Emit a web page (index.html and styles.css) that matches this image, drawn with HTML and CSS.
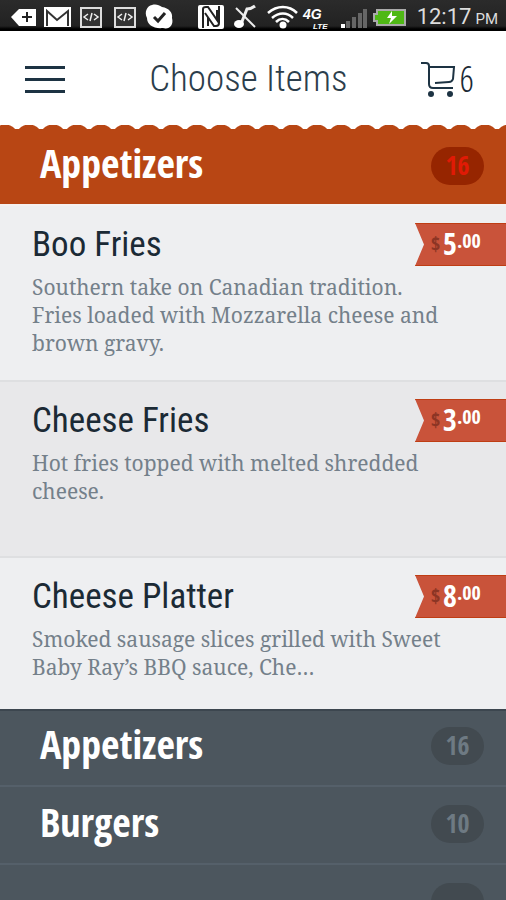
FILE: index.html
```html
<!DOCTYPE html>
<html lang="en">
	<head>
		<meta charset="UTF-8">
		<meta name="viewport" content="width=device-width, initial-scale=1">
		<title>Choose Items</title>
		<link rel="stylesheet" href="styles.css">
	</head>
	<body>
		<div class="page">
			<div class="status">
				<svg class="icons" width="164" height="28" viewBox="0 0 164 28" aria-hidden="true">
					<path d="M1 15L9 7h17v17H9z" fill="#fff"/>
					<path d="M12 15h10M17 10v10" stroke="#222" stroke-width="2"/>
					<path d="M34 5h27v20H34z" fill="#fff"/>
					<path d="M37 24V9l10 9 11-9v15" fill="none" stroke="#333" stroke-width="2"/>
					<path d="M71 6h20v19H71zM105 6h20v19h-20z" fill="#333" stroke="#ddd" stroke-width="2"/>
					<path d="M78 12l-4 3 4 3M84 12l4 3-4 3M82 11l-2 8M112 12l-4 3 4 3M118 12l4 3-4 3M116 11l-2 8" fill="none" stroke="#eee" stroke-width="1.5"/>
					<path d="M142 3c4-1 7 0 10 2 7 1 11 6 10 11 2 7-3 12-9 10-9 1-16-3-16-10-3-6 0-12 5-13z" fill="#fff"/>
					<path d="M144 15l4 4 7-8" fill="none" stroke="#222" stroke-width="3"/>
				</svg>
				<svg class="icons system" width="210" height="28" viewBox="0 0 210 28" aria-hidden="true">
					<rect x="1" y="3" width="26" height="24" rx="2" fill="#fff"/>
					<path d="M6 26V7q0-2 3-2h2l9 13V8M22 4v17q0 3-3 3h-2L8 11M11 15v9" fill="none" stroke="#222" stroke-width="2"/>
					<path d="M39 6l19 19" stroke="#eee" stroke-width="2"/>
					<path d="M44 22l6-15q4 0 8-3" fill="none" stroke="#eee" stroke-width="3"/>
					<ellipse cx="42" cy="22" rx="5" ry="4" fill="#fff"/>
					<path d="M71 11c9-8 21-8 29 0M75 16c7-6 15-6 21 0M79 20c4-4 9-4 13 0" fill="none" stroke="#fff" stroke-width="2.5"/>
					<circle cx="86" cy="23" r="3.5" fill="#fff"/>
					<text class="net" x="106" y="17">4G</text>
					<text class="lte" x="116" y="27">LTE</text>
					<path d="M144 22h4v4h-4z" fill="#fff"/>
					<path d="M149 19h4v7h-4zM155 15h4v11h-4zM161 11h4v15h-4zM166 7h4v19h-4z" fill="#666"/>
					<path d="M180 8h28v15h-28v-4h-3v-7h3z" fill="#4fb815" stroke="#aaa" stroke-width="2"/>
					<path d="M195 9l-5 7h4l-2 6 8-8h-5z" fill="#fff"/>
				</svg>
				<div class="clock"><span>12:17</span><small>PM</small></div>
			</div>
			<header class="header">
				<button class="menu" type="button" aria-label="Menu"><i></i><i></i><i></i></button>
				<h1>Choose Items</h1>
				<a class="cart" href="#cart" aria-label="Cart, 6 items">
					<svg width="36" height="36" viewBox="0 0 36 36" aria-hidden="true">
						<path d="M1 2h5q3 0 3 3v18q0 4 4 4h20M9 6h25l-1 12q-1 3-4 3l-14 1" fill="none" stroke="#1d3343" stroke-width="2"/>
						<circle cx="11" cy="33" r="3" fill="#1d3343"/>
						<circle cx="30" cy="33" r="3" fill="#1d3343"/>
					</svg>
					<span>6</span>
				</a>
			</header>
			<a class="category current" href="#appetizers"><span>Appetizers</span><b class="count">16</b></a>
			<ul class="items">
				<li>
					<h2>Boo Fries</h2>
					<p>Southern take on Canadian tradition. Fries loaded with Mozzarella cheese and brown gravy.</p>
					<div class="price"><i>$</i><b>5</b><sup>.00</sup></div>
				</li>
				<li>
					<h2>Cheese Fries</h2>
					<p>Hot fries topped with melted shredded cheese.</p>
					<div class="price"><i>$</i><b>3</b><sup>.00</sup></div>
				</li>
				<li>
					<h2>Cheese Platter</h2>
					<p>Smoked sausage slices grilled with Sweet Baby Ray’s BBQ sauce, Che…</p>
					<div class="price"><i>$</i><b>8</b><sup>.00</sup></div>
				</li>
			</ul>
			<nav class="categories">
				<a class="category" href="#appetizers"><span>Appetizers</span><b class="count">16</b></a>
				<a class="category" href="#burgers"><span>Burgers</span><b class="count">10</b></a>
				<a class="category" href="#more" aria-label="More"><span></span><b class="count"></b></a>
			</nav>
		</div>
	</body>
</html>
```
FILE: styles.css
```css
*{
	margin:0;
	padding:0;
	box-sizing:border-box;
}
body{
	background:#4c565e;
	font-family:"Roboto Condensed","Liberation Sans Narrow",sans-serif;
	color:#1b2a35;
}
a{
	color:inherit;
	text-decoration:none;
}
.page{
	height:100vh;
	overflow:hidden;
}
/* phone status bar */
.status{
	display:flex;
	align-items:center;
	height:31px;
	padding:0 8px 0 10px;
	background:linear-gradient(#2b2b2b,#222 26px,#000 29px,#000);
	color:#ddd;
}
.icons{
	flex:none;
}
.system{
	margin-left:23px;
}
.net{
	font:italic bold 14px "Liberation Sans",sans-serif;
	fill:#fff;
}
.lte{
	font:italic bold 8px "Liberation Sans",sans-serif;
	fill:#fff;
}
.clock{
	display:flex;
	align-items:baseline;
	gap:4px;
	margin-left:auto;
	padding-top:4px;
	font:22px/28px Roboto,sans-serif;
}
.clock small{
	font-size:15px;
}
/* top bar */
.header{
	display:flex;
	align-items:center;
	justify-content:space-between;
	height:94px;
	padding:2px 32px 0 25px;
	background:#fff;
}
.menu{
	display:flex;
	flex-direction:column;
	gap:9px;
	width:40px;
	border:0;
	background:none;
}
.menu i{
	width:40px;
	height:3px;
	background:#1d3343;
}
.header h1{
	padding-left:12px;
	font-size:37px;
	font-weight:300;
	line-height:48px;
	color:#2c3e4c;
}
.cart{
	display:flex;
	align-items:center;
	gap:4px;
	font-family:"Open Sans Condensed Light","Roboto Condensed",sans-serif;
	font-size:36px;
	line-height:40px;
}
/* category rows */
.category{
	display:flex;
	align-items:center;
	justify-content:space-between;
	height:78px;
	padding:0 22px 2px 40px;
	color:#fff;
	font-family:"Open Sans Condensed","Liberation Sans Narrow",sans-serif;
	font-size:40px;
	font-weight:bold;
}
.category span{
	padding-bottom:6px;
}
.count{
	width:53px;
	height:38px;
	border-radius:19px;
	background:#424a50;
	color:#6e7a83;
	font-size:26px;
	line-height:36px;
	text-align:center;
}
.current{
	height:79px;
	padding-top:4px;
	background:radial-gradient(circle at 50% 13px,#b84614 13px,transparent 14px) -7px 0/24px 5px repeat-x,
		linear-gradient(#fff,#fff) 0 0/100% 4px no-repeat,#b84614;
}
.current .count{
	background:#962500;
	color:#e01a05;
}
.categories{
	box-shadow:inset 0 2px #3c464f;
}
.categories .category{
	border-bottom:2px solid #55606a;
}
/* dishes */
.items{
	list-style:none;
}
.items li{
	position:relative;
	min-height:176px;
	padding:17px 56px 0 32px;
	background:#eeeff1;
	border-top:2px solid #dedfe1;
}
.items li:first-child{
	border-top-color:#f5f1f0;
}
.items li:nth-child(2){
	background:#e8e8ea;
}
.items li:last-child{
	min-height:153px;
}
.items h2{
	font-size:35px;
	font-weight:normal;
	line-height:44px;
}
.items p{
	margin-top:6px;
	color:#74808a;
	font:21px/28px "Noto Serif","DejaVu Serif Condensed","DejaVu Serif",serif;
}
/* ribbon pinned to the right edge */
.price{
	position:absolute;
	top:17px;
	right:0;
	display:flex;
	width:91px;
	height:43px;
	padding-left:16px;
	background:#c9533a;
	border-top:1px solid #bf3d14;
	border-bottom:1px solid #bf3d14;
	clip-path:polygon(0 0,100% 0,100% 100%,0 100%,9px 50%);
	color:#fff;
	font-family:"Open Sans Condensed","Liberation Sans Narrow",sans-serif;
	line-height:40px;
}
.price i{
	width:12px;
	color:#8c3524;
	font-size:20px;
	font-style:normal;
	font-weight:bold;
}
.price b{
	font-size:30px;
}
.price sup{
	font-size:20px;
	font-weight:bold;
	line-height:34px;
}
```
